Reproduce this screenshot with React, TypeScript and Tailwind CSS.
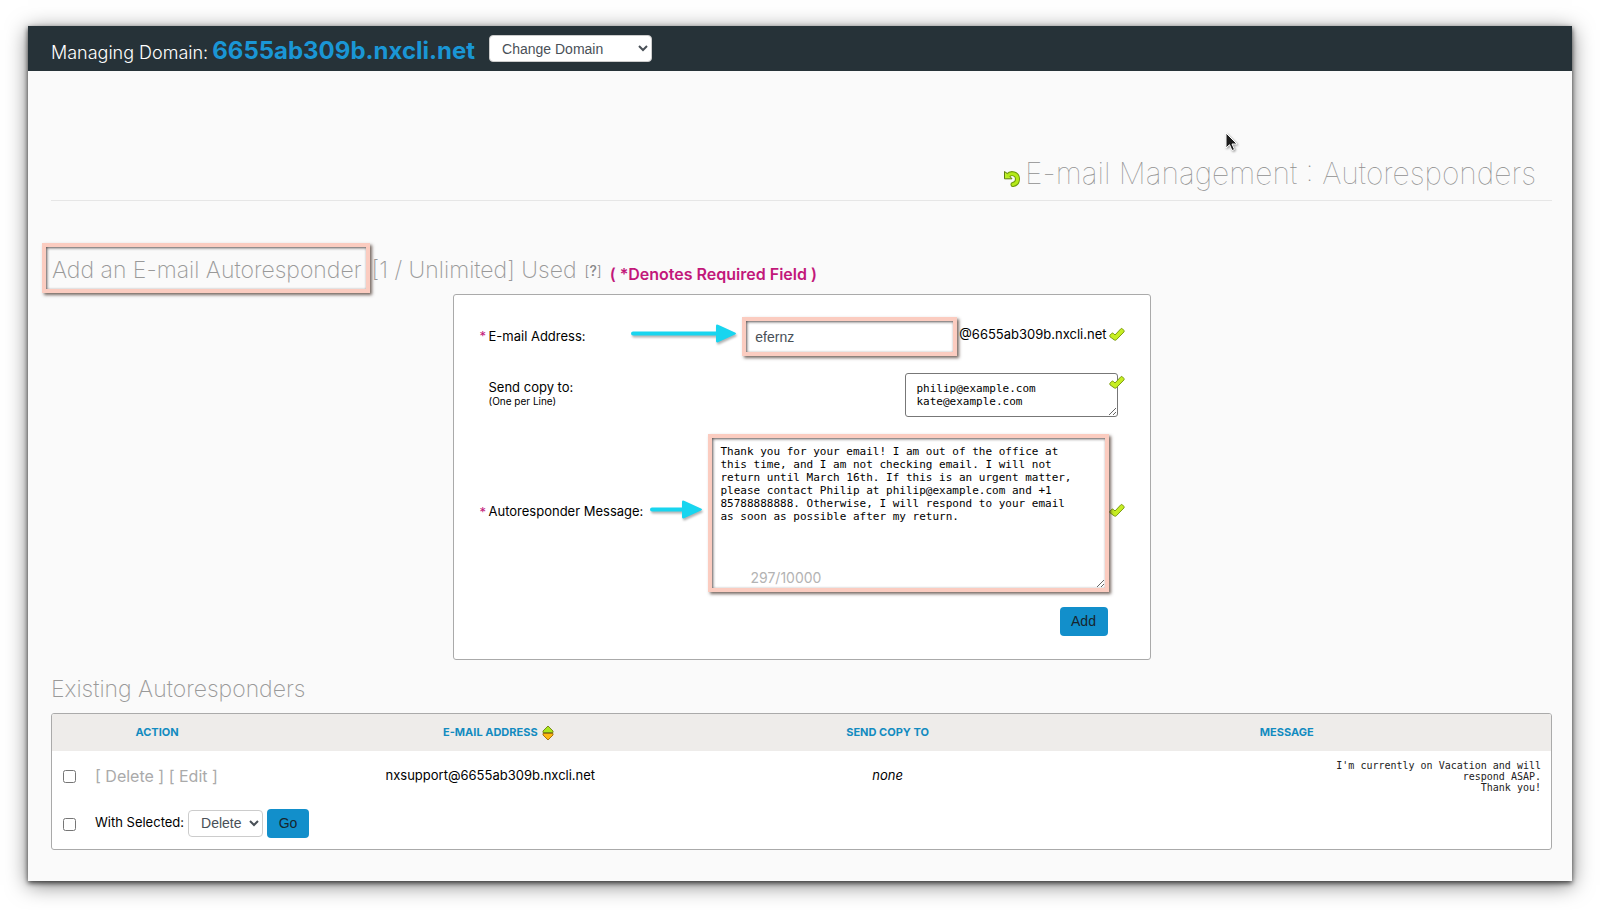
import { useState } from 'react'

const savedResponders = [
  {
    id: 'nxsupport',
    address: 'nxsupport@6655ab309b.nxcli.net',
    copyTo: 'none',
    message: "I'm currently on Vacation and will respond ASAP.\nThank you!",
  },
]

const copyAddresses = 'philip@example.com\nkate@example.com'

const replyText = [
  'Thank you for your email! I am out of the office at',
  'this time, and I am not checking email. I will not',
  'return until March 16th. If this is an urgent matter,',
  'please contact Philip at philip@example.com and +1',
  '85788888888. Otherwise, I will respond to your email',
  'as soon as possible after my return.',
].join('\n')

const highlight =
  'border-4 border-[#fbccc0] shadow-[2px_2px_3px_rgba(60,40,30,0.7),inset_1px_1px_3px_rgba(50,40,40,0.8)]'

function CheckMark({ className = '' }: { className?: string }) {
  return (
    <svg viewBox="0 0 16 16" className={`h-4 w-4 shrink-0 ${className}`} aria-hidden="true">
      <path
        d="M1 9.200 2.800 7.300q.8-.6 1.600.1L6 9l5.800-6.200q.8-.7 1.600 0l1.500 1.600q.6.800 0 1.600L7.300 13.800q-1.100.9-2.200 0L1 10.800q-.6-.8 0-1.600Z"
        fill="#c6ee22"
        stroke="#7d9c12"
        strokeWidth="1"
        strokeLinejoin="round"
      />
    </svg>
  )
}

function Arrow({ length }: { length: number }) {
  const tip = length - 3
  return (
    <svg
      width={length}
      height="22"
      viewBox={`0 0 ${length} 22`}
      className="mr-[3px] mb-1.5 ml-auto shrink-0 drop-shadow-[1px_2px_1px_rgba(0,0,0,0.3)]"
      aria-hidden="true"
    >
      <path d={`M2 10.500H${tip - 18}`} stroke="#18d5ef" strokeWidth="4" strokeLinecap="round" />
      <path
        d={`M${tip - 20} 3q0-2 2-1.300L${tip - 1} 9.500q2 1 0 2L${tip - 18} 19.300q-2 .7-2-1.300Z`}
        fill="#18d5ef"
      />
    </svg>
  )
}

function BackIcon() {
  return (
    <svg viewBox="0 0 18 18" className="h-[18px] w-[18px]" aria-hidden="true">
      <path d="M5 6.500C8 3 14.500 4.500 14.500 10c0 3-2 5-4.500 5.500" fill="none" stroke="#6f9a0c" strokeWidth="5" strokeLinecap="round" />
      <path d="M1.500 2.500v7.300H9L6.800 7.300 4 4.300Z" fill="#bdf02a" stroke="#5f7f10" strokeLinejoin="round" />
      <path d="M5 6.500C8 3.500 14.500 4.500 14.500 10c0 3-2 5-4.500 5.500" fill="none" stroke="#b4ea18" strokeWidth="3" strokeLinecap="round" />
    </svg>
  )
}

function SortIcon() {
  return (
    <svg viewBox="0 0 12 16" className="h-4 w-3" aria-hidden="true">
      <path d="M6 1 11 6v1.500H1V6Z" fill="#a9e61c" stroke="#7a8a18" strokeLinejoin="round" />
      <path d="M6 15 11 10V8.500H1V10Z" fill="#fdb813" stroke="#a87412" strokeLinejoin="round" />
    </svg>
  )
}

function Pointer() {
  return (
    <svg
      viewBox="0 0 14 20"
      className="absolute top-[61px] right-[313px] h-5 w-3.5 drop-shadow-[1px_1px_1px_rgba(0,0,0,0.4)]"
      aria-hidden="true"
    >
      <path d="M1 1v15l3.500-3.300L7 18.500l2.500-1L7 12h5Z" fill="#1c1c1c" stroke="#fff" />
    </svg>
  )
}

function Required() {
  return <span className="w-[9px] shrink-0 text-[#c2187a]">*</span>
}

export default function App() {
  const [address, setAddress] = useState('efernz')
  const [copyTo, setCopyTo] = useState(copyAddresses)
  const [message, setMessage] = useState(replyText)

  return (
    <div className="min-h-screen bg-white px-7 pt-[26px] pb-[29px] font-['Inter',sans-serif] text-[13px] text-black">
      <div className="bg-[#fafafa] shadow-[0_2px_5px_rgba(0,0,0,0.7),0_4px_20px_rgba(0,0,0,0.5)]">
        {/* Domain bar */}
        <header className="flex h-[45px] items-center bg-[#263238] px-[23px]">
          <p className="flex items-baseline gap-1 pt-1 text-white">
            <span className="text-[18px] font-light">Managing Domain:</span>
            <span className="text-[24px] leading-8 font-bold text-[#1a96d5]">6655ab309b.nxcli.net</span>
          </p>
          <select
            aria-label="Change Domain"
            className="ml-3.5 h-[27px] w-[163px] rounded-[4px] border border-[#ccc] bg-white px-2 font-['Liberation_Sans',sans-serif] text-[14px] text-[#495057]"
          >
            <option>Change Domain</option>
          </select>
        </header>

        <main className="pr-5 pb-[31px] pl-[23px]">
          {/* Page title */}
          <div className="relative flex items-end justify-end gap-1 border-b border-[#e6e6e6] pt-[82px] pr-4 pb-[7px]">
            <Pointer />
            <a href="#back" aria-label="Back" className="mb-1.5">
              <BackIcon />
            </a>
            <h1 className="text-[30px] leading-10 font-thin text-[#909090]">E-mail Management : Autoresponders</h1>
          </div>

          {/* Add form */}
          <div className="mt-[42px] -ml-[9px] flex h-[50px] items-center">
            <h2 className="flex h-full items-center text-[23px] font-extralight text-[#999]">
              <span className={`mr-0.5 flex h-full items-center pt-1 pr-1 pl-1.5 ${highlight}`}>
                Add an E-mail Autoresponder
              </span>
              <span className="pt-1">[1 / Unlimited] Used</span>
            </h2>
            <a href="#help" className="mt-1 ml-2 text-[14px] font-light text-[#888]">
              [<span className="font-medium">?</span>]
            </a>
            <p className="mt-3 ml-2 text-[16px] font-semibold text-[#c2187a]">( *Denotes Required Field )</p>
          </div>

          <form
            className="mx-auto mt-px w-[698px] rounded-[3px] border border-[#aaa] bg-white pt-[22px] pr-[25px] pb-[23px] pl-[26px]"
            onSubmit={(e) => e.preventDefault()}
          >
            <div className="flex h-[39px] items-center">
              <Required />
              <label htmlFor="address">E-mail Address:</label>
              <Arrow length={108} />
              <input
                id="address"
                value={address}
                onChange={(e) => setAddress(e.target.value)}
                className={`h-full w-[215px] px-[9px] font-['Liberation_Sans',sans-serif] text-[14px] text-[#495057] ${highlight}`}
              />
              <span className="mx-0.5 mb-1">@6655ab309b.nxcli.net</span>
              <CheckMark className="mb-1.5" />
            </div>

            <div className="mt-[17px] flex items-start justify-between pl-[9px]">
              <label htmlFor="copy-to" className="pt-[7px] leading-[14px]">
                Send copy to:
                <span className="block text-[10px]">(One per Line)</span>
              </label>
              <div className="relative mr-[7px] flex">
                <textarea
                  id="copy-to"
                  value={copyTo}
                  onChange={(e) => setCopyTo(e.target.value)}
                  className="h-[44px] w-[213px] overflow-hidden rounded-[3px] border border-[#777] px-[11px] py-[8px] font-['DejaVu_Sans_Mono',monospace] text-[11px] leading-[13px]"
                />
                <CheckMark className="absolute top-px right-[-7px]" />
              </div>
            </div>

            <div className="mt-[17px] flex items-center">
              <Required />
              <label htmlFor="message" className="mb-0.5">
                Autoresponder Message:
              </label>
              <Arrow length={55} />
              <div className="relative flex">
                <textarea
                  id="message"
                  value={message}
                  onChange={(e) => setMessage(e.target.value)}
                  className={`h-[158px] w-[401px] overflow-hidden px-[9px] py-[7px] font-['DejaVu_Sans_Mono',monospace] text-[11px] leading-[13px] ${highlight}`}
                />
                <span className="absolute bottom-1 left-[43px] text-[14px] text-[#b3b3b3]">297/10000</span>
              </div>
              <CheckMark className="mb-1.5" />
            </div>

            <div className="mt-[15px] mr-[17px] flex justify-end">
              <button
                type="submit"
                className="h-[29px] w-12 rounded-[4px] bg-[#128fcb] font-['Liberation_Sans',sans-serif] text-[14px] text-[#17252e]"
              >
                Add
              </button>
            </div>
          </form>

          {/* Existing responders */}
          <h2 className="mt-[13px] text-[23px] leading-8 font-extralight text-[#999]">Existing Autoresponders</h2>
          <div className="mt-2 overflow-hidden rounded-[3px] border border-[#aaa] bg-white">
            <table className="w-full table-fixed">
              <thead className="h-[37px] bg-[#eeecea] text-[11px] font-extrabold text-[#128bc0] uppercase">
                <tr>
                  <th className="w-[34px]" aria-label="Select" />
                  <th className="w-[142px]">Action</th>
                  <th className="w-[35%]">
                    <span className="relative">
                      E-mail Address
                      <span className="absolute top-0 left-full ml-1">
                        <SortIcon />
                      </span>
                    </span>
                  </th>
                  <th className="w-[18%]">Send Copy To</th>
                  <th>Message</th>
                </tr>
              </thead>
              <tbody>
                {savedResponders.map((item) => (
                  <tr key={item.id} className="h-[50px]">
                    <td className="pl-[11px]">
                      <input type="checkbox" aria-label={`Select ${item.address}`} className="block h-[13px] w-[13px]" />
                    </td>
                    <td className="pl-[9px] text-[16px] whitespace-nowrap text-[#aaa]">
                      <a href="#delete">[ Delete ]</a> <a href="#edit">[ Edit ]</a>
                    </td>
                    <td className="text-center">{item.address}</td>
                    <td className="text-center italic">{item.copyTo}</td>
                    <td className="pr-2.5">
                      <pre className="ml-auto w-[230px] text-right font-['DejaVu_Sans_Mono',monospace] text-[10px] leading-[11px] whitespace-pre-wrap text-[#222]">
                        {item.message}
                      </pre>
                    </td>
                  </tr>
                ))}
                <tr className="h-12">
                  <td className="pb-0.5 pl-[11px]">
                    <input type="checkbox" aria-label="Select all" className="block h-[13px] w-[13px]" />
                  </td>
                  <td colSpan={4} className="pb-1 pl-[9px]">
                    <div className="flex items-center gap-1">
                      <label htmlFor="bulk">With Selected:</label>
                      <select
                        id="bulk"
                        className="h-[27px] w-[75px] rounded-[4px] border border-[#ccc] bg-white pl-2 font-['Liberation_Sans',sans-serif] text-[14px] text-[#495057]"
                      >
                        <option>Delete</option>
                      </select>
                      <button
                        type="button"
                        className="h-[29px] w-[42px] rounded-[4px] bg-[#128fcb] font-['Liberation_Sans',sans-serif] text-[14px] text-[#17252e]"
                      >
                        Go
                      </button>
                    </div>
                  </td>
                </tr>
              </tbody>
            </table>
          </div>
        </main>
      </div>
    </div>
  )
}
